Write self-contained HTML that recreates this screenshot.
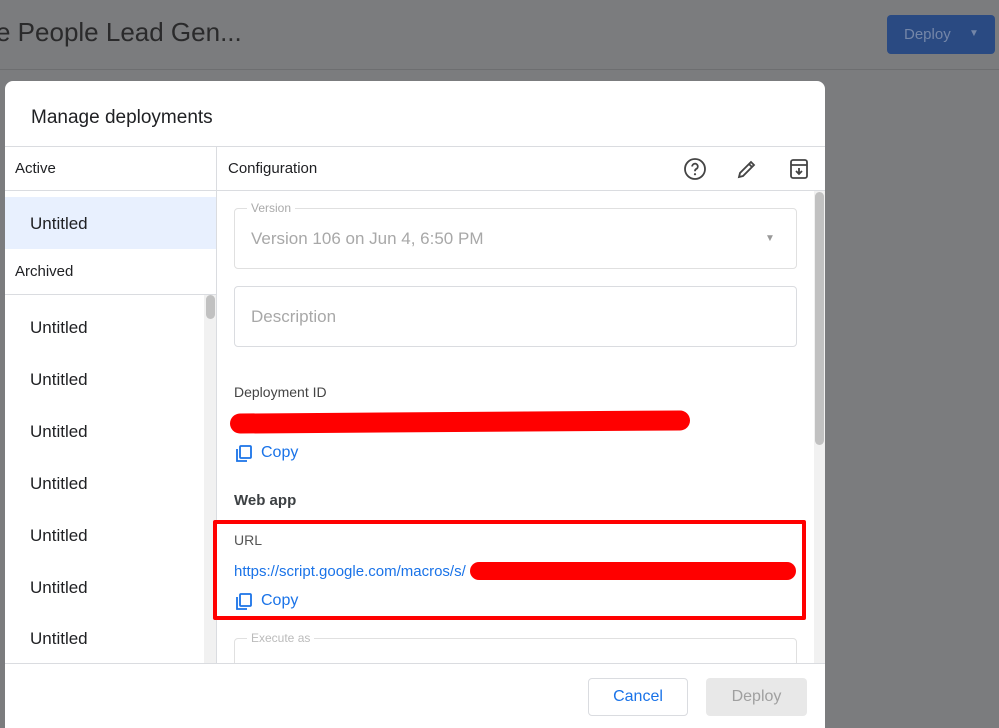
<!DOCTYPE html><html><head><style>
html,body{margin:0;width:999px;height:728px;overflow:hidden}
body{background:#7b7c7e;font-family:"Liberation Sans",sans-serif;position:relative}
.a{position:absolute}
.t{font-size:14px;color:#202124}
.li{position:absolute;left:30px;font-size:17px;color:#202124}
</style></head><body>
<div class="a" style="left:-4px;top:17px;font-size:26px;color:#2a2a2b">e People Lead Gen...</div>
<div class="a" style="left:0;top:69px;width:999px;height:1px;background:#6d6e70"></div>
<div class="a" style="left:887px;top:15px;width:108px;height:39px;background:#2a4a82;border-radius:4px;color:#7486a8;font-size:15px"><span class="a" style="left:17px;top:11px">Deploy</span><span class="a" style="left:82px;top:13px;font-size:10px">▼</span></div>
<div class="a" style="left:5px;top:81px;width:820px;height:647px;background:#fff;border-radius:8px 8px 0 0;overflow:hidden">
 <div class="a" style="left:26px;top:26px;font-size:19px;color:#202124">Manage deployments</div>
 <div class="a" style="left:0;top:65px;width:820px;height:1px;background:#dadce0"></div>
 <div class="a" style="left:211px;top:65px;width:1px;height:520px;background:#dadce0"></div>
 <div class="a" style="left:0;top:109px;width:820px;height:1px;background:#dadce0"></div>
 <div class="a t" style="left:10px;top:79px;font-size:15px">Active</div>
 <div class="a t" style="left:223px;top:79px;font-size:15px">Configuration</div>
 <svg class="a" style="left:678px;top:76px" width="24" height="24" viewBox="0 0 24 24"><circle cx="12" cy="12" r="10" fill="none" stroke="#444" stroke-width="1.8"/><path d="M9.2 9.5a2.8 2.8 0 1 1 4 2.5c-1 .5-1.2 1-1.2 2.2" fill="none" stroke="#444" stroke-width="1.8"/><circle cx="12" cy="17.2" r="1.1" fill="#444"/></svg>
 <svg class="a" style="left:730px;top:76px" width="24" height="24" viewBox="0 0 24 24"><path d="M4 20l1-4L16 5l3 3L8 19z M14 7l3 3" fill="none" stroke="#444" stroke-width="1.8"/></svg>
 <svg class="a" style="left:782px;top:76px" width="24" height="24" viewBox="0 0 24 24"><rect x="4" y="3" width="16" height="18" rx="2" fill="none" stroke="#444" stroke-width="1.8"/><path d="M4 8h16M12 11v6M9 14l3 3 3-3" fill="none" stroke="#444" stroke-width="1.8"/></svg>
 <div class="a" style="left:0;top:116px;width:211px;height:52px;background:#e8f0fe"></div>
 <div class="li" style="left:25px;top:133px">Untitled</div>
 <div class="a" style="left:0;top:213px;width:211px;height:1px;background:#dadce0"></div>
 <div class="a t" style="left:10px;top:182px;font-size:15px">Archived</div>
 <div class="li" style="left:25px;top:237px">Untitled</div>
 <div class="li" style="left:25px;top:289px">Untitled</div>
 <div class="li" style="left:25px;top:341px">Untitled</div>
 <div class="li" style="left:25px;top:393px">Untitled</div>
 <div class="li" style="left:25px;top:445px">Untitled</div>
 <div class="li" style="left:25px;top:497px">Untitled</div>
 <div class="li" style="left:25px;top:548px">Untitled</div>
 <div class="a" style="left:199px;top:214px;width:12px;height:370px;background:#f1f1f1"></div>
 <div class="a" style="left:201px;top:214px;width:9px;height:24px;background:#c1c1c1;border-radius:5px"></div>
 <div class="a" style="left:809px;top:110px;width:11px;height:475px;background:#f1f1f1"></div>
 <div class="a" style="left:810px;top:111px;width:9px;height:253px;background:#c1c1c1;border-radius:5px"></div>
 <div class="a" style="left:229px;top:127px;width:561px;height:59px;border:1px solid #e0e0e0;border-radius:4px"></div>
 <div class="a" style="left:242px;top:120px;background:#fff;padding:0 4px;font-size:12px;color:#aaa">Version</div>
 <div class="a" style="left:246px;top:148px;font-size:17px;color:#a8a8a8">Version 106 on Jun 4, 6:50 PM</div>
 <div class="a" style="left:760px;top:152px;font-size:10px;color:#999">▼</div>
 <div class="a" style="left:229px;top:205px;width:561px;height:59px;border:1px solid #dadce0;border-radius:4px"></div>
 <div class="a" style="left:246px;top:226px;font-size:17px;color:#a8a8a8">Description</div>
 <div class="a" style="left:229px;top:303px;font-size:14px;color:#444">Deployment ID</div>
 <div class="a" style="left:225px;top:331px;width:460px;height:20px;background:#f00;border-radius:10px;transform:rotate(-0.4deg)"></div>
 <svg class="a" style="left:229px;top:363px" width="20" height="20" viewBox="0 0 20 20"><path d="M3 5v12h10" fill="none" stroke="#1a73e8" stroke-width="1.8"/><rect x="6" y="2" width="11" height="12" rx="1" fill="none" stroke="#1a73e8" stroke-width="1.8"/></svg>
 <div class="a" style="left:256px;top:363px;font-size:16px;color:#1a73e8">Copy</div>
 <div class="a" style="left:229px;top:411px;font-size:15px;font-weight:bold;color:#3c4043">Web app</div>
 <div class="a" style="left:208px;top:439px;width:585px;height:92px;border:4px solid #f00;border-radius:2px"></div>
 <div class="a" style="left:229px;top:451px;font-size:14px;color:#555">URL</div>
 <div class="a" style="left:229px;top:482px;font-size:15px;color:#1a73e8">https://script.google.com/macros/s/</div>
 <div class="a" style="left:465px;top:481px;width:326px;height:18px;background:#f00;border-radius:9px"></div>
 <svg class="a" style="left:229px;top:511px" width="20" height="20" viewBox="0 0 20 20"><path d="M3 5v12h10" fill="none" stroke="#1a73e8" stroke-width="1.8"/><rect x="6" y="2" width="11" height="12" rx="1" fill="none" stroke="#1a73e8" stroke-width="1.8"/></svg>
 <div class="a" style="left:256px;top:511px;font-size:16px;color:#1a73e8">Copy</div>
 <div class="a" style="left:229px;top:557px;width:561px;height:60px;border:1px solid #e0e0e0;border-radius:4px"></div>
 <div class="a" style="left:242px;top:550px;background:#fff;padding:0 4px;font-size:12px;color:#bbb">Execute as</div>
 <div class="a" style="left:0;top:582px;width:820px;height:1px;background:#dadce0"></div>
 <div class="a" style="left:0;top:583px;width:820px;height:64px;background:#fff"></div>
 <div class="a" style="left:583px;top:597px;width:98px;height:36px;border:1px solid #dadce0;border-radius:4px;color:#1a73e8;font-size:16px;text-align:center;line-height:36px">Cancel</div>
 <div class="a" style="left:701px;top:597px;width:101px;height:38px;background:#e8e8e8;border-radius:4px;color:#a0a0a0;font-size:16px;text-align:center;line-height:38px">Deploy</div>
</div>
</body></html>
